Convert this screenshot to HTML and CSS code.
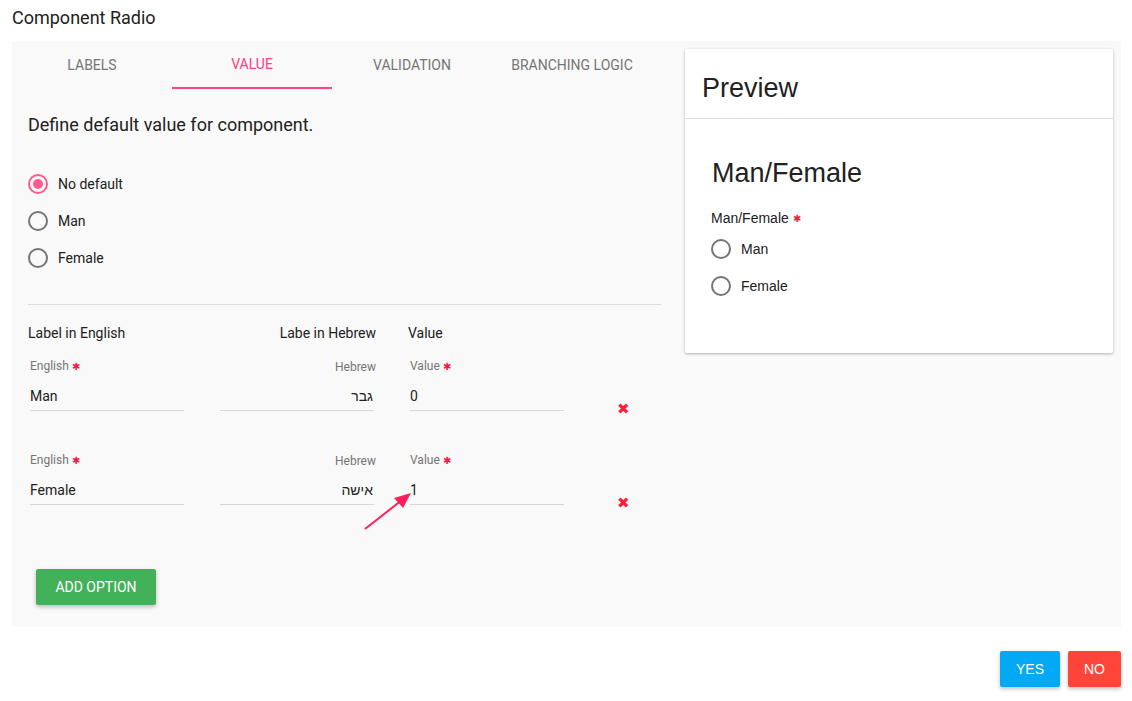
FILE: index.html
```html
<!DOCTYPE html>
<html>
<head>
<meta charset="utf-8">
<link rel="stylesheet" href="styles.css">
</head>
<body>
<h1 class="title">Component Radio</h1>
<div class="panel">
  <div class="editor">
    <div class="tabs">
      <div class="tab">Labels</div>
      <div class="tab active">Value</div>
      <div class="tab">Validation</div>
      <div class="tab">Branching Logic</div>
    </div>
    <div class="content">
      <p class="intro">Define default value for component.</p>
      <div class="radio-group">
        <label class="radio checked"><span class="circle"></span>No default</label>
        <label class="radio"><span class="circle"></span>Man</label>
        <label class="radio"><span class="circle"></span>Female</label>
      </div>
      <hr class="divider">
      <div class="head-row">
        <span class="h-en">Label in English</span>
        <span class="h-he">Labe in Hebrew</span>
        <span class="h-val">Value</span>
      </div>
      <div class="opt-row">
        <div class="field"><div class="flabel">English <span class="req">✱</span></div><div class="finput">Man</div></div>
        <div class="field rtl"><div class="flabel">Hebrew</div><div class="finput" dir="rtl">גבר</div></div>
        <div class="field"><div class="flabel">Value <span class="req">✱</span></div><div class="finput">0</div></div>
        <span class="del">✖</span>
      </div>
      <div class="opt-row second">
        <div class="field"><div class="flabel">English <span class="req">✱</span></div><div class="finput">Female</div></div>
        <div class="field rtl"><div class="flabel">Hebrew</div><div class="finput" dir="rtl">אישה</div></div>
        <div class="field"><div class="flabel">Value <span class="req">✱</span></div><div class="finput">1</div></div>
        <span class="del">✖</span>
      </div>
      <button class="add-btn">Add Option</button>
    </div>
  </div>
  <div class="preview">
    <div class="preview-head">Preview</div>
    <div class="preview-body">
      <h2 class="pv-title">Man/Female</h2>
      <div class="pv-label">Man/Female <span class="req">✱</span></div>
      <label class="radio pv"><span class="circle"></span>Man</label>
      <label class="radio pv"><span class="circle"></span>Female</label>
    </div>
  </div>
</div>
<div class="actions">
  <button class="btn yes">Yes</button>
  <button class="btn no">No</button>
</div>
<svg class="arrow" width="60" height="50" viewBox="0 0 60 50">
  <line x1="5" y1="45" x2="42" y2="16" stroke="#ff1f5a" stroke-width="2"/>
  <polygon points="51,9 34,14 43,24" fill="#ff1f5a"/>
</svg>
</body>
</html>
```
FILE: styles.css
```css
* { box-sizing: border-box; }
body {
  margin: 0;
  padding: 0 11px 0 12px;
  font-family: Roboto, "Liberation Sans", sans-serif;
  color: #212121;
  background: #fff;
  position: relative;
  width: 1132px;
  height: 701px;
  overflow: hidden;
}
.title {
  margin: 0;
  padding-top: 6px;
  font-size: 18px;
  line-height: 24px;
  font-weight: 400;
  color: #212121;
  margin-bottom: 11px;
}
.panel {
  display: flex;
  align-items: flex-start;
  background: #f9f9f9;
  padding-right: 8px;
}
.editor { width: 665px; }
.tabs { display: flex; }
.tab {
  width: 160px;
  height: 48px;
  line-height: 48px;
  text-align: center;
  text-transform: uppercase;
  font-size: 14px;
  color: #757575;
  border-bottom: 2px solid transparent;
}
.tab.active { color: #ff4081; border-bottom-color: #ff4081; line-height: 47px; }
.content { padding: 24px 16px 22px 16px; }
.intro { margin: 0; font-size: 18px; line-height: 24px; }
.radio-group { margin-top: 28px; }
.radio {
  display: flex;
  align-items: center;
  height: 37px;
  font-size: 14px;
  color: #212121;
}
.circle {
  width: 20px;
  height: 20px;
  border-radius: 50%;
  border: 2px solid #757575;
  margin-right: 10px;
  position: relative;
  flex: none;
}
.checked .circle { border-color: #ff5b8d; }
.checked .circle::after {
  content: "";
  position: absolute;
  left: 3px; top: 3px;
  width: 10px; height: 10px;
  border-radius: 50%;
  background: #ff5b8d;
}
.divider { border: 0; border-top: 1px solid #dcdcdc; margin: 28px 0 0 0; }
.head-row {
  display: grid;
  grid-template-columns: 190px 158px 100px;
  margin-top: 18px;
  font-size: 14px;
  line-height: 20px;
}
.h-he { text-align: right; }
.h-val { padding-left: 32px; }
.opt-row {
  display: grid;
  grid-template-columns: 154px 154px 154px 60px;
  column-gap: 36px;
  align-items: end;
  margin-top: 15px;
  padding-left: 2px;
}
.opt-row.second { margin-top: 41px; }
.flabel { font-size: 12px; line-height: 16px; color: #757575; }
.rtl .flabel { text-align: right; margin-right: -2px; }
.req { color: #ff1744; font-size: 10px; vertical-align: middle; }
.finput {
  padding-top: 11px;
  padding-bottom: 4px;
  font-size: 14px;
  line-height: 20px;
  border-bottom: 1px solid #d6d6d6;
  color: #212121;
}
.rtl .finput { text-align: right; padding-right: 1px; }
.del {
  color: #ff1a3a;
  font-size: 15px;
  line-height: 16px;
  padding-left: 17px;
  margin-bottom: -6px;
}
.add-btn {
  display: block;
  margin: 64px 0 0 8px;
  width: 120px;
  height: 36px;
  border: 0;
  border-radius: 2px;
  background: #43b05a;
  color: #fff;
  font-family: Roboto, sans-serif;
  font-size: 14px;
  text-transform: uppercase;
  box-shadow: 0 2px 4px rgba(0,0,0,0.25);
}
.preview {
  margin: 8px 0 0 8px;
  width: 428px;
  height: 304px;
  background: #fff;
  border-radius: 2px;
  box-shadow: 0 1px 3px rgba(0,0,0,0.3);
  font-family: "Liberation Sans", Arial, sans-serif;
}
.preview-head {
  height: 70px;
  padding: 22px 17px 0;
  font-size: 27px;
  line-height: 34px;
  border-bottom: 1px solid #dedede;
  color: #212121;
}
.preview-body { padding: 36px 26px 0; }
.pv-title { margin: 0; font-size: 27px; font-weight: 400; line-height: 36px; color: #212121; padding-left: 1px; }
.pv-label { margin-top: 18px; font-size: 14px; line-height: 18px; color: #212121; }
.radio.pv { height: 37px; margin-top: 2px; }
.radio.pv + .radio.pv { margin-top: 0; }
.actions {
  display: flex;
  justify-content: flex-end;
  gap: 8px;
  margin-top: 24px;
}
.btn {
  height: 36px;
  border: 0;
  border-radius: 2px;
  color: #fff;
  font-family: "Liberation Sans", Arial, sans-serif;
  font-size: 14px;
  text-transform: uppercase;
  box-shadow: 0 2px 4px rgba(0,0,0,0.25);
}
.yes { width: 60px; background: #03a9f4; }
.no { width: 53px; background: #ff4539; }
.arrow { position: absolute; left: 360px; top: 484px; }
```
